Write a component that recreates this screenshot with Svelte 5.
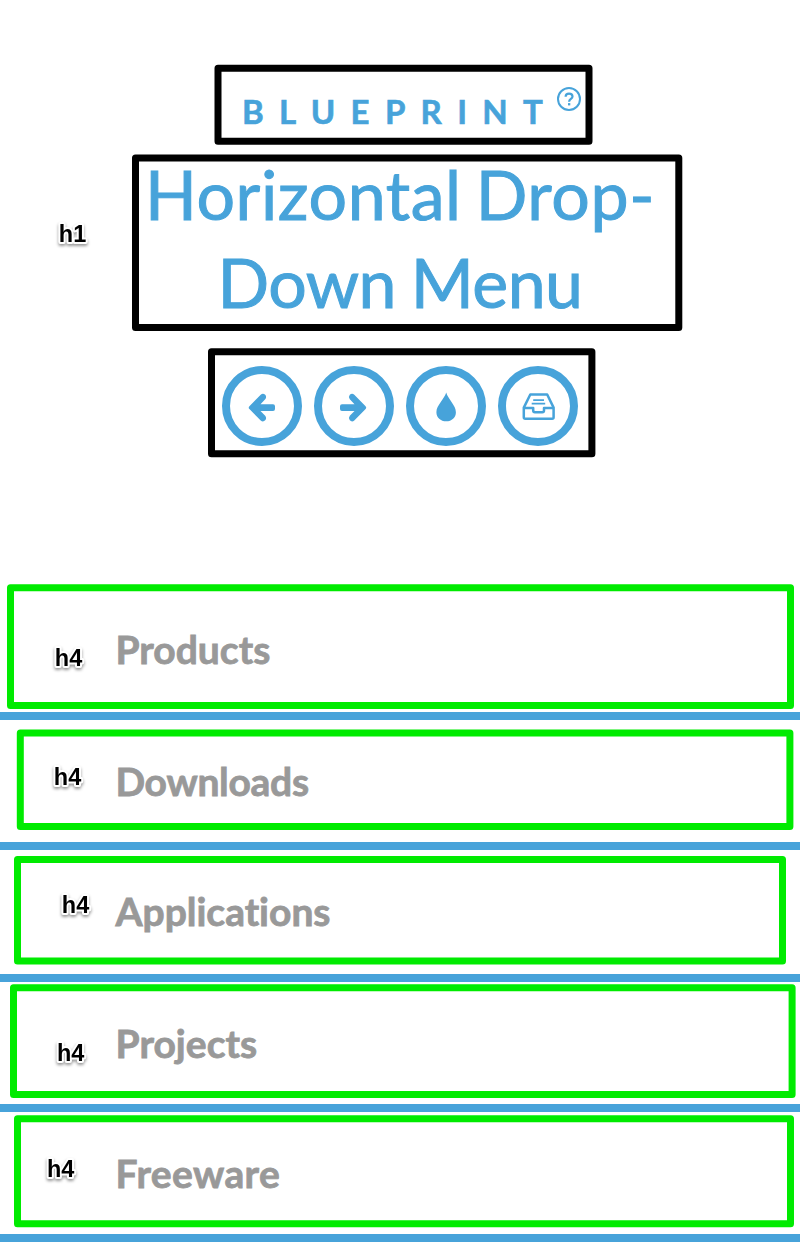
<script>
  const items = [
    { label: 'Products', spacing: 0 },
    { label: 'Downloads', spacing: -0.3 },
    { label: 'Applications', spacing: -0.02 },
    { label: 'Projects', spacing: 0.05 },
    { label: 'Freeware', spacing: 0.4 }
  ];

  const frames = [
    { x1: 214.5, y1: 64.7, x2: 592.5, y2: 144.7, color: '#000' },
    { x1: 132, y1: 154.6, x2: 682.3, y2: 330.9, color: '#000' },
    { x1: 208, y1: 348.3, x2: 595.4, y2: 457.3, color: '#000' },
    { x1: 7, y1: 584.3, x2: 794, y2: 709, color: '#00eb00' },
    { x1: 16.8, y1: 729.5, x2: 793.4, y2: 830, color: '#00eb00' },
    { x1: 14, y1: 856, x2: 786, y2: 964.6, color: '#00eb00' },
    { x1: 10, y1: 984.3, x2: 795.6, y2: 1098, color: '#00eb00' },
    { x1: 14, y1: 1115.2, x2: 794, y2: 1227.2, color: '#00eb00' }
  ];

  const tags = [
    { x: 58.8, y: 242, text: 'h1' },
    { x: 54.8, y: 666, text: 'h4' },
    { x: 53.8, y: 785, text: 'h4' },
    { x: 61.8, y: 913, text: 'h4' },
    { x: 57, y: 1061, text: 'h4' },
    { x: 47, y: 1177, text: 'h4' }
  ];
</script>

<div class="page">
  <header>
    <div class="brand">
      <span>Blueprint</span>
      <svg class="help" width="26" height="26" viewBox="0 0 26 26">
        <circle cx="13" cy="13" r="11" fill="none" stroke="currentColor" stroke-width="2" />
        <path d="M9.600 10.700C9.700 8.500 11 7.600 13 7.600c2.200 0 3.500 1.100 3.500 2.900 0 2.400-3.400 2.500-3.400 5.200" fill="none" stroke="currentColor" stroke-width="2.200" />
        <rect x="12" y="17.100" width="2.300" height="2.300" fill="currentColor" />
      </svg>
    </div>
    <h1><span class="first">Horizontal Drop-</span><br /><span class="second">Down Menu</span></h1>
    <nav class="tools">
      <a href="#prev" aria-label="Previous">
        <svg width="64" height="64" viewBox="0 0 64 64">
          <path d="M19.400 32.300L30.700 20.700Q33 18.700 35.200 20.800Q37 23 35.200 25.300L30.500 30.200H43Q45 30.200 45 32.200V35Q45 37 43 37H30.500L35.200 41.700Q37 44 35.200 46.300Q33 48.500 30.700 46.400L19.400 35.100Q18 33.700 19.400 32.300Z" fill="currentColor" />
        </svg>
      </a>
      <a href="#next" aria-label="Next">
        <svg width="64" height="64" viewBox="0 0 64 64">
          <path d="M43.600 32.300L32.300 20.700Q30 18.700 27.800 20.800Q26 23 27.800 25.300L32.500 30.200H20Q18 30.200 18 32.200V35Q18 37 20 37H32.500L27.800 41.700Q26 44 27.800 46.300Q30 48.500 32.300 46.400L43.600 35.100Q45 33.700 43.600 32.300Z" fill="currentColor" />
        </svg>
      </a>
      <a href="#drop" aria-label="Drop">
        <svg width="64" height="64" viewBox="0 0 64 64">
          <path d="M32.200 18.600C34 25 41.900 31.500 41.900 38.200C41.900 43.500 37.800 47.300 32.200 47.300S22.400 43.500 22.400 38.200C22.400 31.500 30.400 25 32.200 18.600Z" fill="currentColor" />
        </svg>
      </a>
      <a href="#archive" aria-label="Archive">
        <svg width="64" height="64" viewBox="0 0 64 64" fill="none" stroke="currentColor" stroke-linejoin="round">
          <path d="M17.800 33.600L24.300 20.500H41.200L47.600 33.600V43.200Q47.600 44.700 46.100 44.700H19.300Q17.800 44.700 17.800 43.200Z" stroke-width="2.500" />
          <path d="M18 34.100H27.200V36.500Q27.200 38.200 28.900 38.200H36.300Q38 38.200 38 36.500V34.100H47.400" stroke-width="2.500" />
          <path d="M27.200 26.200H38M25.700 29.600H39.200" stroke-width="1.800" />
        </svg>
      </a>
    </nav>
  </header>

  <ul class="menu">
    {#each items as item}
      <li><h4 style:letter-spacing="{item.spacing}px">{item.label}</h4></li>
    {/each}
  </ul>

  <svg class="notes" width="800" height="1242" viewBox="0 0 800 1242">
    {#each frames as f}
      <rect x={f.x1 + 3.5} y={f.y1 + 3.5} width={f.x2 - f.x1 - 7} height={f.y2 - f.y1 - 7} fill="none" stroke={f.color} stroke-width="7" stroke-linejoin="round" />
    {/each}
    {#each tags as t}
      <text x={t.x} y={t.y}>{t.text}</text>
    {/each}
  </svg>
</div>

<style>
  :global(body) {
    margin: 0;
    background: #fff;
  }
  .page {
    position: relative;
    width: 800px;
    height: 1242px;
    overflow: hidden;
    font-family: Lato, sans-serif;
    font-variant-ligatures: none;
    color: #47a3da;
  }
  header {
    box-sizing: border-box;
    height: 588px;
    padding-top: 89px;
    text-align: center;
  }
  .brand {
    display: flex;
    align-items: flex-start;
    height: 44px;
    padding-left: 242px;
    font-size: 33px;
    line-height: 44px;
    font-weight: 700;
    letter-spacing: 15.3px;
    text-transform: uppercase;
    -webkit-text-stroke: 0.6px currentColor;
  }
  .brand span {
    width: 314px;
    text-align: left;
    white-space: nowrap;
  }
  .help {
    margin-top: -3px;
    flex: none;
  }
  h1 {
    margin: 17px 0 40px;
    font-size: 68px;
    line-height: 88px;
    font-weight: 400;
    -webkit-text-stroke: 1px currentColor;
  }
  .first {
    letter-spacing: 0.6px;
    word-spacing: -4px;
  }
  .second {
    letter-spacing: -0.55px;
    word-spacing: -2px;
  }
  .tools {
    display: flex;
    justify-content: center;
    gap: 12px;
  }
  .tools a {
    display: block;
    box-sizing: border-box;
    width: 80px;
    height: 80px;
    border: 8px solid #47a3da;
    border-radius: 50%;
    color: inherit;
  }
  .tools svg {
    display: block;
  }
  .menu {
    margin: 0;
    padding: 0;
    list-style: none;
  }
  li {
    box-sizing: border-box;
    height: 130px;
    padding: 37px 0 0 115.5px;
    border-bottom: 8px solid #47a3da;
  }
  li:nth-child(1),
  li:nth-child(3) {
    height: 132px;
  }
  h4 {
    margin: 0;
    font-size: 39px;
    line-height: 48px;
    font-weight: 700;
    color: #999;
    -webkit-text-stroke: 0.8px currentColor;
  }
  .notes {
    position: absolute;
    inset: 0;
    pointer-events: none;
  }
  .notes text {
    font: 700 23.500px "Liberation Sans", Arial, sans-serif;
    fill: #000;
    stroke: #fff;
    stroke-width: 4px;
    stroke-linejoin: round;
    paint-order: stroke;
    filter: drop-shadow(0 2px 1.5px rgba(0, 0, 0, 0.4));
  }
</style>
